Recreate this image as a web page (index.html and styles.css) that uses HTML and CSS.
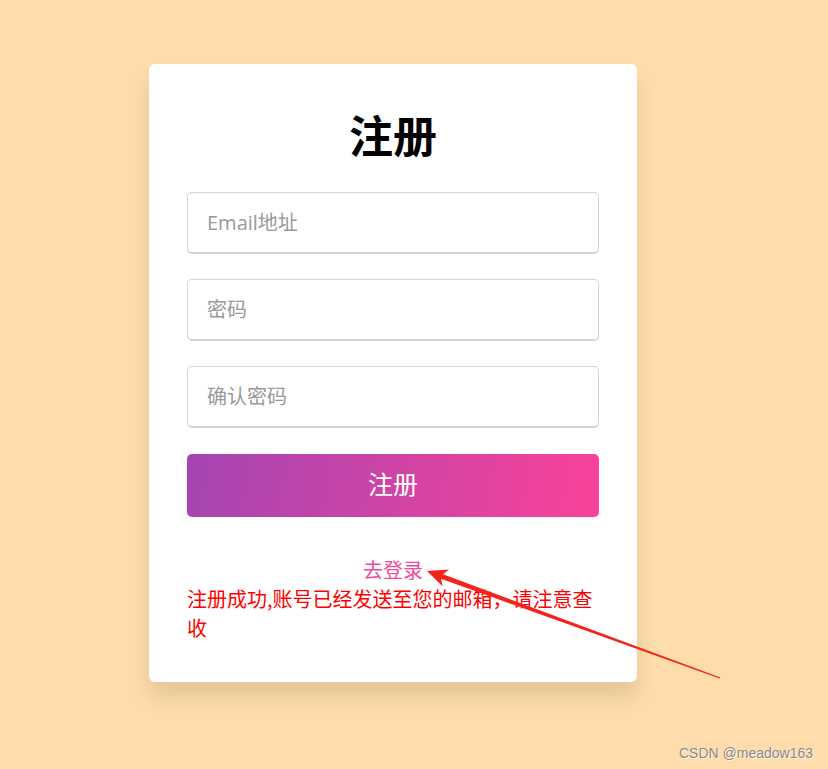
FILE: index.html
```html
<!DOCTYPE html>
<html lang="zh">
<head>
<meta charset="utf-8">
<title>注册</title>
<link rel="stylesheet" href="styles.css">
</head>
<body>
<div class="page">
  <div class="card">
    <h1 class="title">注册</h1>
    <form class="form">
      <input class="field" type="text" placeholder="Email地址">
      <input class="field" type="password" placeholder="密码">
      <input class="field" type="password" placeholder="确认密码">
      <button class="btn" type="button">注册</button>
    </form>
    <div class="login-link">去登录</div>
    <div class="msg">注册成功,账号已经发送至您的邮箱，请注意查收</div>
  </div>
</div>
<svg class="annot" width="828" height="769" viewBox="0 0 828 769">
  <polygon fill="#f5231a" points="427,571 449,569.4 443,574.2 720.3,677.4 719.7,678.6 441,578.8 442.7,586.4"/>
</svg>
<div class="watermark">CSDN @meadow163</div>
</body>
</html>
```
FILE: styles.css
```css
html, body {
  margin: 0;
  padding: 0;
}
body {
  width: 828px;
  height: 769px;
  background: #fedcab;
  position: relative;
  overflow: hidden;
  font-family: "Noto Sans CJK SC", "Noto Sans", sans-serif;
}
.page {
  padding: 64px 0 0 149px;
}
.card {
  width: 488px;
  box-sizing: border-box;
  background: #fff;
  border-radius: 6px;
  padding: 47px 38px 40px;
  box-shadow: 0 15px 20px rgba(0, 0, 0, 0.1);
}
.title {
  margin: 0;
  text-align: center;
  font-size: 44px;
  line-height: 46px;
  padding-bottom: 2px;
  font-weight: 700;
  color: #000;
}
.form {
  margin-top: 33px;
  display: flex;
  flex-direction: column;
  gap: 25px;
}
.field {
  display: block;
  height: 62px;
  box-sizing: border-box;
  width: 100%;
  border: 1px solid lightgrey;
  border-bottom-width: 2px;
  border-radius: 5px;
  padding: 0 19px;
  font-family: "Open Sans", "Noto Sans CJK SC", sans-serif;
  font-size: 20px;
  outline: none;
  background: #fff;
}
.field::placeholder {
  color: #999;
}
.btn {
  margin-top: 1px;
  height: 63px;
  border: none;
  border-radius: 5px;
  background: linear-gradient(100deg, #a445b2, #fa4299);
  color: #fff;
  font-family: "Noto Sans CJK SC", sans-serif;
  font-size: 25px;
  padding: 0 0 5px;
  cursor: pointer;
}
.login-link {
  margin-top: 38px;
  text-align: center;
  color: #f04c9c;
  font-size: 20px;
  line-height: 29px;
}
.msg {
  color: #ff0000;
  font-size: 20px;
  line-height: 29px;
}
.annot {
  position: absolute;
  left: 0;
  top: 0;
  pointer-events: none;
}
.watermark {
  position: absolute;
  right: 15px;
  bottom: 8px;
  font-family: "Liberation Sans", sans-serif;
  font-size: 14px;
  color: #8a8a8a;
  text-shadow: 1px 1px 0 rgba(255, 255, 255, 0.8);
}
```
